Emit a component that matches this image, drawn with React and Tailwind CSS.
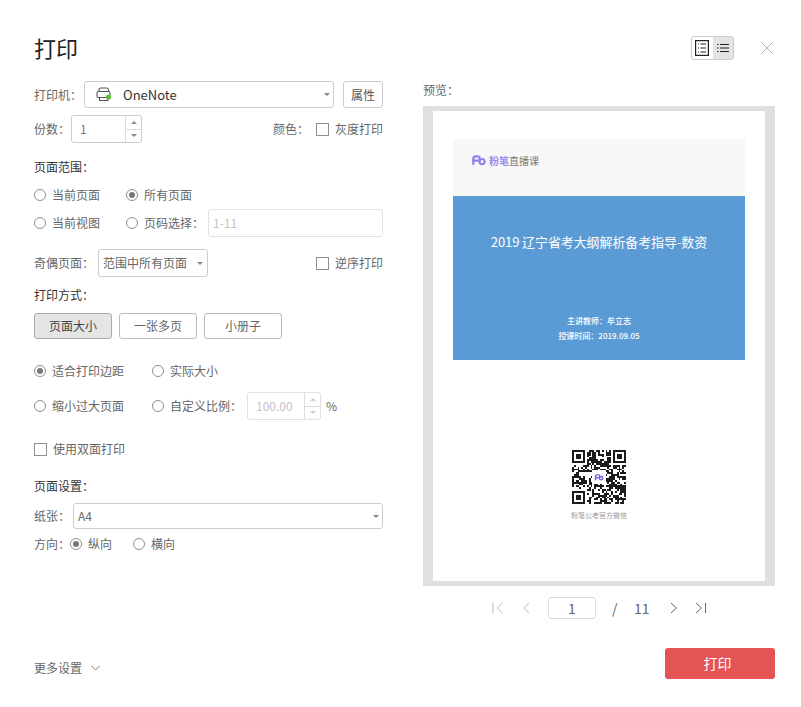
import React from 'react';

function Radio({ label, checked, className = '' }) {
  return (
    <div className={`flex items-center h-[18px] text-xs text-[#666] ${className}`}>
      <span className="w-3 h-3 rounded-full border border-[#8f8f8f] bg-white flex items-center justify-center mr-[6px] shrink-0">
        {checked && <span className="w-[6px] h-[6px] rounded-full bg-[#777]" />}
      </span>
      <span className="whitespace-nowrap">{label}</span>
    </div>
  );
}

function Checkbox({ label, className = '' }) {
  return (
    <div className={`flex items-center h-[18px] text-xs text-[#666] ${className}`}>
      <span className="w-[13px] h-[13px] border border-[#8f8f8f] bg-white mr-[6px] shrink-0" />
      <span className="whitespace-nowrap">{label}</span>
    </div>
  );
}

function Caret() {
  return <span className="w-0 h-0 border-x-[3px] border-x-transparent border-t-[3px] border-t-[#888] shrink-0" />;
}

function Spinner({ disabled }) {
  const up = disabled ? 'border-b-[#ccc]' : 'border-b-[#888]';
  const down = disabled ? 'border-t-[#ccc]' : 'border-t-[#888]';
  return (
    <div className="w-4 h-full flex flex-col border-l border-[#ddd]">
      <div className="flex-1 flex items-center justify-center border-b border-[#ddd]">
        <span className={`w-0 h-0 border-x-[3px] border-x-transparent border-b-[3px] ${up}`} />
      </div>
      <div className="flex-1 flex items-center justify-center">
        <span className={`w-0 h-0 border-x-[3px] border-x-transparent border-t-[3px] ${down}`} />
      </div>
    </div>
  );
}

function FbLogo({ size = 14, color = '#8f80ea' }) {
  return (
    <svg width={size} height={size * 0.75} viewBox="0 0 16 12" fill="none">
      <path d="M1.5 11V4.5C1.5 2.5 3 1.5 4.5 1.5H7.5M1.5 6.5H7" stroke={color} strokeWidth="2.6" />
      <circle cx="11.5" cy="7.5" r="3" stroke={color} strokeWidth="2.4" />
      <path d="M8.5 1V8" stroke={color} strokeWidth="2.4" />
    </svg>
  );
}

function QrCode() {
  const n = 29;
  const cells = [];
  const inFinder = (x, y) => (x < 8 && y < 8) || (x >= n - 8 && y < 8) || (x < 8 && y >= n - 8);
  for (let y = 0; y < n; y++) {
    for (let x = 0; x < n; x++) {
      if (inFinder(x, y)) continue;
      const h = Math.sin(x * 12.9898 + y * 78.233) * 43758.5453;
      if (h - Math.floor(h) > 0.48) cells.push(<rect key={`${x}-${y}`} x={x} y={y} width="1" height="1" />);
    }
  }
  const finder = (x, y) => (
    <g key={`f${x}-${y}`}>
      <rect x={x} y={y} width="7" height="7" />
      <rect x={x + 1} y={y + 1} width="5" height="5" fill="#fff" />
      <rect x={x + 2} y={y + 2} width="3" height="3" />
    </g>
  );
  return (
    <svg width="54" height="54" viewBox="0 0 29 29" fill="#1c1c1c" shapeRendering="crispEdges">
      {cells}
      {finder(0, 0)}
      {finder(n - 7, 0)}
      {finder(0, n - 7)}
      <rect x="11" y="11" width="7" height="7" fill="#fff" />
      <g transform="translate(12.2 12.9) scale(0.3)" shapeRendering="auto">
        <path d="M1.5 11V4.5C1.5 2.5 3 1.5 4.5 1.5H7.5M1.5 6.5H7" stroke="#6f5fe0" strokeWidth="2.6" fill="none" />
        <circle cx="11.5" cy="7.5" r="3" stroke="#6f5fe0" strokeWidth="2.4" fill="none" />
        <path d="M8.5 1V8" stroke="#6f5fe0" strokeWidth="2.4" fill="none" />
      </g>
    </svg>
  );
}

function PagerIcon({ d, color }) {
  return (
    <svg width="12" height="12" viewBox="0 0 12 12" fill="none" stroke={color} strokeWidth="1">
      <path d={d} />
    </svg>
  );
}

export default function App() {
  return (
    <div className="w-[801px] h-[707px] bg-white pl-[34px] pr-[26px] pt-[34px] flex flex-col font-['Noto_Sans_CJK_SC',sans-serif] overflow-hidden">
      {/* header */}
      <div className="h-[30px] flex items-center justify-between">
        <h1 className="text-[22px] leading-[30px] text-[#222] mb-1">打印</h1>
        <div className="flex items-center mb-[2px] mr-[1px]">
          <div className="flex w-[43px] h-[24px] border border-[#ccc] rounded-[3px] overflow-hidden">
            <div className="w-[21px] bg-white flex items-center justify-center pr-[1px]">
              <svg width="14" height="16" viewBox="0 0 14 16" fill="none" stroke="#222" strokeWidth="1.2">
                <rect x="0.6" y="0.6" width="12.8" height="14.8" />
                <path d="M3 4H4M5.5 4H11M3 8H4M5.5 8H11M3 12H4M5.5 12H11" />
              </svg>
            </div>
            <div className="flex-1 bg-[#e4e4e4] flex items-center justify-center">
              <svg width="12" height="10" viewBox="0 0 12 10" fill="none" stroke="#222">
                <path d="M0 1.5H1.5M3 1.5H12M0 5H1.5M3 5H12M0 8.5H1.5M3 8.5H12" />
              </svg>
            </div>
          </div>
          <svg className="ml-[26px]" width="14" height="14" viewBox="0 0 14 14" fill="none" stroke="#b5b5b5">
            <path d="M1 1L13 13M13 1L1 13" />
          </svg>
        </div>
      </div>

      <div className="flex-1 flex mt-[17px]">
        {/* left column */}
        <div className="w-[349px] flex flex-col text-xs text-[#666]">
          <div className="flex items-center h-[27px]">
            <span className="w-[50px]">打印机：</span>
            <div className="w-[250px] h-full border border-[#ccc] rounded-[3px] flex items-center pl-[11px] pr-[3px]">
              <svg width="16" height="15" viewBox="0 0 16 15" fill="none" stroke="#555" strokeWidth="1.1">
                <path d="M3 4.500V3C3 1.800 3.800 1 5 1H10.500C11.700 1 12.500 1.800 12.500 3V4.500" />
                <rect x="1" y="4.500" width="13" height="6" rx="1.500" />
                <path d="M3.500 10.500V13.500H12V12" />
                <circle cx="12.500" cy="10" r="2.500" fill="#5cb83c" stroke="none" />
              </svg>
              <span className="ml-[11px] text-[13px] text-[#333] flex-1">OneNote</span>
              <Caret />
            </div>
            <div className="w-10 h-full ml-[9px] border border-[#ccc] rounded-[3px] flex items-center justify-center text-[#555]">属性</div>
          </div>

          <div className="flex items-center h-[28px] mt-[7px]">
            <span className="w-[37px]">份数：</span>
            <div className="w-[71px] h-full border border-[#ccc] rounded-[3px] flex items-center">
              <span className="flex-1 pl-2 text-[#777]">1</span>
              <Spinner />
            </div>
            <span className="ml-auto mr-[7px]">颜色：</span>
            <Checkbox label="灰度打印" />
          </div>

          <div className="h-[18px] leading-[18px] mt-[15px] text-[#333]">页面范围：</div>

          <div className="flex mt-[10px]">
            <Radio label="当前页面" className="w-[92px]" />
            <Radio label="所有页面" checked />
          </div>
          <div className="flex items-center h-[28px] mt-[5px]">
            <Radio label="当前视图" className="w-[92px]" />
            <Radio label="页码选择：" className="w-[82px]" />
            <div className="flex-1 h-full border border-[#e2e2e2] rounded-[3px] flex items-center pl-1 text-[#c4c4c4]">1-11</div>
          </div>

          <div className="flex items-center h-[28px] mt-[12px]">
            <span className="w-[64px]">奇偶页面：</span>
            <div className="w-[110px] h-full border border-[#ccc] rounded-[3px] flex items-center justify-between pl-1 pr-[4px]">
              <span>范围中所有页面</span>
              <Caret />
            </div>
            <Checkbox label="逆序打印" className="ml-auto" />
          </div>

          <div className="h-[18px] leading-[18px] mt-[9px] text-[#333]">打印方式：</div>

          <div className="flex gap-[7px] mt-[9px]">
            <div className="w-[78px] h-[26px] border border-[#aaa] rounded-[3px] bg-[#e5e5e5] flex items-center justify-center text-[#444]">页面大小</div>
            <div className="w-[78px] h-[26px] border border-[#bbb] rounded-[3px] flex items-center justify-center">一张多页</div>
            <div className="w-[78px] h-[26px] border border-[#bbb] rounded-[3px] flex items-center justify-center">小册子</div>
          </div>

          <div className="flex mt-[23px]">
            <Radio label="适合打印边距" checked className="w-[118px]" />
            <Radio label="实际大小" />
          </div>
          <div className="flex items-center h-[28px] mt-[12px]">
            <Radio label="缩小过大页面" className="w-[118px]" />
            <Radio label="自定义比例：" className="w-[95px]" />
            <div className="w-[74px] h-full border border-[#e2e2e2] rounded-[3px] flex items-center">
              <span className="flex-1 pl-2 text-[#c4c4c4]">100.00</span>
              <Spinner disabled />
            </div>
            <span className="ml-[5px]">%</span>
          </div>

          <Checkbox label="使用双面打印" className="mt-[20px]" />

          <div className="h-[18px] leading-[18px] mt-[19px] text-[#333]">页面设置：</div>

          <div className="flex items-center h-[26px] mt-[8px]">
            <span className="w-[39px]">纸张：</span>
            <div className="flex-1 h-full border border-[#ccc] rounded-[3px] flex items-center justify-between pl-1 pr-[3px]">
              <span>A4</span>
              <Caret />
            </div>
          </div>

          <div className="flex items-center h-[18px] mt-[6px]">
            <span className="w-[36px]">方向：</span>
            <Radio label="纵向" checked className="w-[63px]" />
            <Radio label="横向" />
          </div>

          <div className="flex items-center h-[18px] mt-auto mb-[30px]">
            <span>更多设置</span>
            <svg className="ml-[9px]" width="9" height="6" viewBox="0 0 9 6" fill="none" stroke="#777">
              <path d="M0.500 1L4.500 5L8.500 1" />
            </svg>
          </div>
        </div>

        {/* preview column */}
        <div className="w-[352px] ml-10 flex flex-col">
          <div className="h-[18px] leading-[18px] text-xs text-[#666]">预览：</div>
          <div className="h-[480px] mt-[7px] border-x-[10px] border-y-[5px] border-[#e0e0e0] bg-white px-5 pt-7 flex flex-col">
            <div className="h-[57px] bg-[#f8f8f8] flex items-center pl-[19px] pb-[14px]">
              <FbLogo />
              <span className="ml-[3px] text-[10px] font-bold text-[#9b8fe8]">粉笔</span>
              <span className="text-[10px] text-[#777]">直播课</span>
            </div>
            <div className="h-[164px] bg-[#5b9bd5] flex flex-col items-center text-white">
              <div className="mt-[36px] text-[13px] leading-5 tracking-[-0.1px]">2019 辽宁省考大纲解析备考指导-数资</div>
              <div className="mt-[61px] text-[8px] leading-[15px] font-medium">主讲教师：牟立志</div>
              <div className="text-[8px] leading-[15px] font-medium">授课时间：2019.09.05</div>
            </div>
            <div className="flex flex-col items-center mt-[90px]">
              <QrCode />
              <div className="mt-[6px] text-[7px] leading-[10px] text-[#999]">粉笔公考官方微信</div>
            </div>
          </div>

          <div className="flex items-center h-[22px] mt-[11px] pl-[69px] text-sm text-[#666]">
            <PagerIcon color="#bbb" d="M1 1V11M10.500 1L5 6L10.500 11" />
            <span className="w-4" />
            <PagerIcon color="#bbb" d="M9 1L3.500 6L9 11" />
            <div className="w-[48px] h-full ml-4 border border-[#ddd] rounded-[3px] flex items-center justify-center">1</div>
            <span className="ml-4 w-[22px]">/</span>
            <span className="w-[34px]">11</span>
            <PagerIcon color="#666" d="M3 1L8.500 6L3 11" />
            <span className="w-[15px]" />
            <PagerIcon color="#666" d="M1 1L6.500 6L1 11M10.500 1V11" />
          </div>

          <div className="h-[31px] mt-[29px] ml-auto w-[110px] rounded-[3px] bg-[#e45454] flex items-center justify-center pr-[5px] pb-[1px] text-sm text-white">打印</div>
        </div>
      </div>
    </div>
  );
}
